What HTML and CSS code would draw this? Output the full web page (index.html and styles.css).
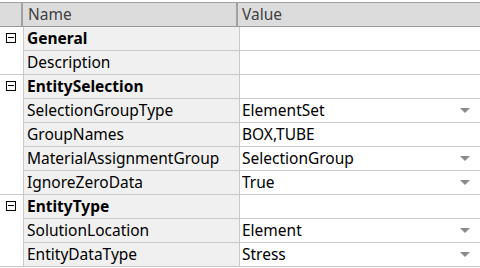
FILE: index.html
```html
<!DOCTYPE html>
<html lang="en">

<head>
    <meta charset="UTF-8">
    <title>Properties</title>
    <link rel="stylesheet" href="styles.css">
</head>

<body>
    <div class="grid">
        <div class="head">
            <div class="h-gutter"></div>
            <div class="h-name">Name</div>
            <div class="h-value">Value</div>
        </div>

        <div class="group">
            <div class="row cat">
                <div class="gutter"><span class="exp"></span></div>
                <div class="name">General</div>
                <div class="value"></div>
            </div>
            <div class="row">
                <div class="gutter"></div>
                <div class="name">Description</div>
                <div class="value"></div>
            </div>
        </div>

        <div class="group">
            <div class="row cat">
                <div class="gutter"><span class="exp"></span></div>
                <div class="name">EntitySelection</div>
                <div class="value"></div>
            </div>
            <div class="row">
                <div class="gutter"></div>
                <div class="name">SelectionGroupType</div>
                <div class="value drop">ElementSet</div>
            </div>
            <div class="row">
                <div class="gutter"></div>
                <div class="name">GroupNames</div>
                <div class="value">BOX,TUBE</div>
            </div>
            <div class="row">
                <div class="gutter"></div>
                <div class="name">MaterialAssignmentGroup</div>
                <div class="value drop">SelectionGroup</div>
            </div>
            <div class="row">
                <div class="gutter"></div>
                <div class="name">IgnoreZeroData</div>
                <div class="value drop">True</div>
            </div>
        </div>

        <div class="group">
            <div class="row cat">
                <div class="gutter"><span class="exp"></span></div>
                <div class="name">EntityType</div>
                <div class="value"></div>
            </div>
            <div class="row">
                <div class="gutter"></div>
                <div class="name">SolutionLocation</div>
                <div class="value drop">Element</div>
            </div>
            <div class="row">
                <div class="gutter"></div>
                <div class="name">EntityDataType</div>
                <div class="value drop">Stress</div>
            </div>
        </div>
    </div>
</body>

</html>
```

FILE: styles.css
```css
body {
    margin: 0;
    padding-top: 2px;
    font-family: "Noto Sans", "Open Sans", sans-serif;
    font-size: 15.5px;
    color: #000;
    background: #fff;
}

/* header bar */
.head {
    display: grid;
    grid-template-columns: 23px 215px 1fr;
    height: 23px;
    background: #dcdcdc;
    border-top: 1px solid #a0a0a0;
    border-bottom: 1px solid #999;
    color: #404040;
    line-height: 23px;
}

.h-gutter {
    border-right: 2px solid #a0a0a0;
}

.h-name {
    padding-left: 5px;
    border-right: 2px solid #a0a0a0;
}

.h-value {
    padding-left: 4px;
}

/* rows */
.row {
    display: grid;
    grid-template-columns: 24px 216px 1fr;
    height: 24px;
    line-height: 23px;
}

.gutter {
    border-right: 1px solid #c8c8c8;
    position: relative;
}

.group .row:last-child .gutter {
    border-bottom: 1px solid #c8c8c8;
}

.name {
    background: #f0f0f0;
    padding-left: 3px;
    border-right: 1px solid #c8c8c8;
    border-bottom: 1px solid #c8c8c8;
    white-space: nowrap;
    overflow: hidden;
}

.value {
    padding-left: 2px;
    border-bottom: 1px solid #c8c8c8;
    position: relative;
}

.cat .name {
    font-weight: bold;
}

/* minus box */
.exp {
    position: absolute;
    left: 6px;
    top: 6px;
    width: 8px;
    height: 8px;
    border: 1px solid #000;
}

.exp::after {
    content: '';
    position: absolute;
    left: 1px;
    top: 3px;
    width: 6px;
    height: 1px;
    background: #000;
}

/* dropdown arrow */
.drop::after {
    content: '';
    position: absolute;
    right: 10px;
    top: 9px;
    border-left: 5px solid transparent;
    border-right: 5px solid transparent;
    border-top: 5px solid #8a8a8a;
}
```
